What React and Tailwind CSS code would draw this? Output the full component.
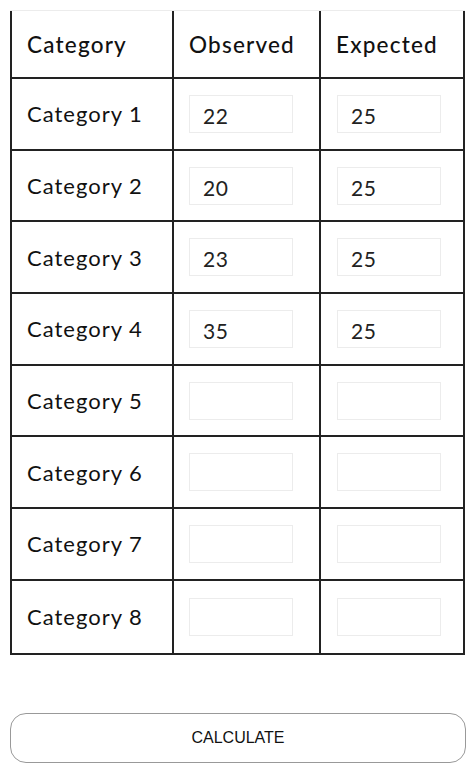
import React from "react";

const rows = [
  ["Category 1", "22", "25"],
  ["Category 2", "20", "25"],
  ["Category 3", "23", "25"],
  ["Category 4", "35", "25"],
  ["Category 5", "", ""],
  ["Category 6", "", ""],
  ["Category 7", "", ""],
  ["Category 8", "", ""],
];

function Cell({ value }) {
  return (
    <div className="flex h-[38px] w-[104px] items-center border border-[#ececec] bg-white px-[13px] pt-[4px] text-[21px] tracking-[0.5px] text-[#222]">
      {value}
    </div>
  );
}

export default function App() {
  return (
    <div className="min-h-[770px] bg-white pt-[10px] font-['Lato','Liberation_Sans',sans-serif] text-[#111]">
      <div className="mx-[10px] w-[455px] border-t border-[#ececec]">
        <div className="grid grid-cols-[160px_147px_144px] border-x-2 border-b-2 border-[#222]">
          <div className="flex h-[68px] items-center border-b-2 border-[#222] pl-[15px] pt-[2px] text-[22.5px] font-medium tracking-[1.2px]">Category</div>
          <div className="flex h-[68px] items-center border-b-2 border-l-2 border-[#222] pl-[15px] pt-[2px] text-[22.5px] font-medium tracking-[1.2px]">Observed</div>
          <div className="flex h-[68px] items-center border-b-2 border-l-2 border-[#222] pl-[15px] pt-[2px] text-[22.5px] font-medium tracking-[1.2px]">Expected</div>
          {rows.map((r, i) => (
            <React.Fragment key={i}>
              <div className={`flex h-[71.7px] items-center pl-[15px] text-[22px] tracking-[1px] ${i < rows.length - 1 ? "border-b-2 border-[#222]" : ""}`}>{r[0]}</div>
              <div className={`flex h-[71.7px] items-center border-l-2 border-[#222] pl-[15px] ${i < rows.length - 1 ? "border-b-2" : ""}`}>
                <Cell value={r[1]} />
              </div>
              <div className={`flex h-[71.7px] items-center border-l-2 border-[#222] pl-[16px] ${i < rows.length - 1 ? "border-b-2" : ""}`}>
                <Cell value={r[2]} />
              </div>
            </React.Fragment>
          ))}
        </div>
      </div>
      <div className="mx-[10px] mt-[58px]">
        <button className="flex h-[50px] w-[456px] items-center justify-center rounded-[16px] border-[1.5px] border-[#999] bg-white font-['Liberation_Sans',Arial,sans-serif] text-[16px] text-[#111]">
          CALCULATE
        </button>
      </div>
    </div>
  );
}
